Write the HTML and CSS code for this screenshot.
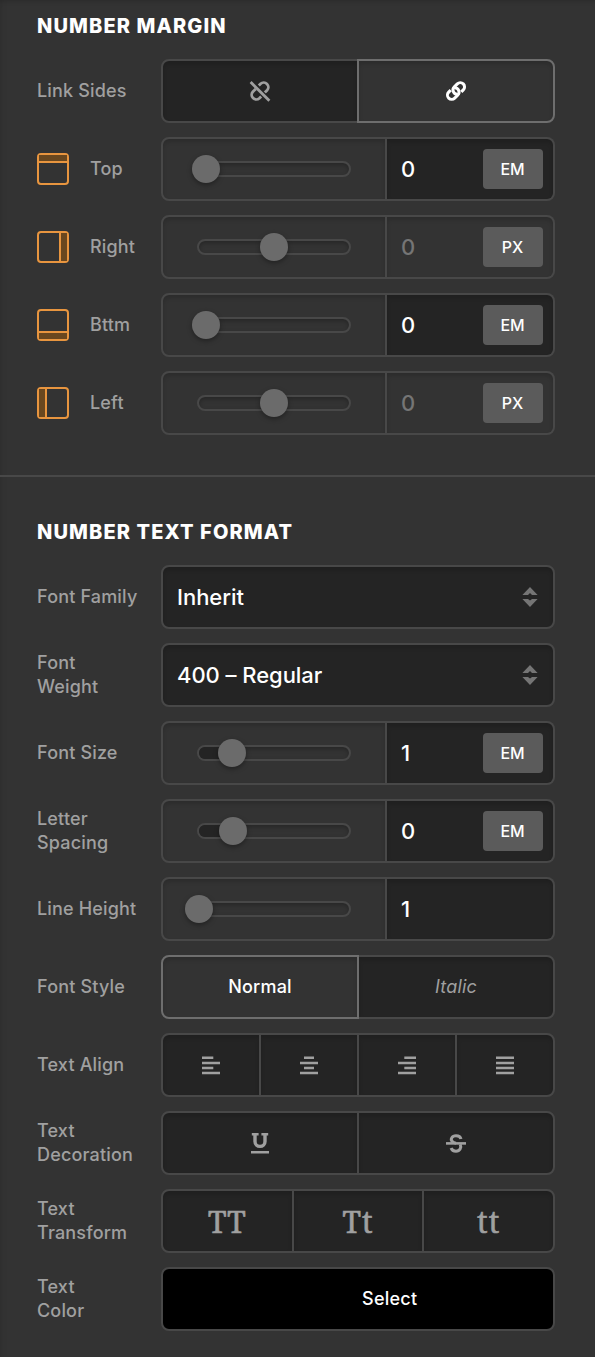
FILE: index.html
```html
<!DOCTYPE html>
<html lang="en">
<head>
  <meta charset="UTF-8" />
  <meta name="viewport" content="width=device-width, initial-scale=1.0"/>
  <title>Number Settings</title>
  <link rel="stylesheet" href="styles.css">
</head>
<body>
  <div class="panel">
    <section class="group">
      <h2>Number Margin</h2>

      <div class="row">
        <label>Link Sides</label>
        <div class="control">
          <button class="choice">
            <svg width="24" height="24" viewBox="0 0 24 24" fill="none" stroke="currentColor" stroke-width="2.8">
              <path d="M10.8 6.6l1.8-1.8a4.6 4.6 0 0 1 6.5 6.5l-2.8 2.8M13.2 17.4l-1.8 1.8a4.6 4.6 0 0 1-6.5-6.5l2.8-2.8"/>
              <path class="gap" d="M4 1.8l18.6 18.6"/>
              <path d="M2.6 3l18.8 18.8"/>
            </svg>
          </button>
          <button class="choice active">
            <svg width="24" height="24" viewBox="0 0 24 24" fill="none" stroke="currentColor" stroke-width="3">
              <path d="M13.4 15.2a4.24 4.24 0 0 1-3.1-7.3l3-3a4.24 4.24 0 0 1 6 6l-2 2"/>
              <path d="M10.6 8.8a4.24 4.24 0 0 1 3.1 7.3l-3 3a4.24 4.24 0 0 1-6-6l2-2"/>
            </svg>
          </button>
        </div>
      </div>

      <div class="row">
        <span class="side top"></span>
        <label class="side-label">Top</label>
        <div class="control">
          <div class="slider"><div class="track"><span class="knob" style="left: -7px"></span></div></div>
          <div class="value"><span>0</span><button class="unit">EM</button></div>
        </div>
      </div>

      <div class="row">
        <span class="side right"></span>
        <label class="side-label">Right</label>
        <div class="control">
          <div class="slider"><div class="track"><span class="knob" style="left: 61px"></span></div></div>
          <div class="value empty"><span>0</span><button class="unit">PX</button></div>
        </div>
      </div>

      <div class="row">
        <span class="side bottom"></span>
        <label class="side-label">Bttm</label>
        <div class="control">
          <div class="slider"><div class="track"><span class="knob" style="left: -7px"></span></div></div>
          <div class="value"><span>0</span><button class="unit">EM</button></div>
        </div>
      </div>

      <div class="row">
        <span class="side left"></span>
        <label class="side-label">Left</label>
        <div class="control">
          <div class="slider"><div class="track"><span class="knob" style="left: 61px"></span></div></div>
          <div class="value empty"><span>0</span><button class="unit">PX</button></div>
        </div>
      </div>
    </section>

    <section class="group">
      <h2>Number Text Format</h2>

      <div class="row">
        <label>Font Family</label>
        <div class="control select">
          <span>Inherit</span>
          <svg width="16" height="20" viewBox="0 0 16 20" fill="currentColor"><path d="M8 0l7.6 8H10L8 6 6 8H.4zM8 20L.4 12H6l2 1.6 2-1.6h5.6z"/></svg>
        </div>
      </div>

      <div class="row">
        <label>Font Weight</label>
        <div class="control select">
          <span>400 – Regular</span>
          <svg width="16" height="20" viewBox="0 0 16 20" fill="currentColor"><path d="M8 0l7.6 8H10L8 6 6 8H.4zM8 20L.4 12H6l2 1.6 2-1.6h5.6z"/></svg>
        </div>
      </div>

      <div class="row">
        <label>Font Size</label>
        <div class="control">
          <div class="slider"><div class="track"><span class="fill" style="width: 34px"></span><span class="knob" style="left: 19.4px"></span></div></div>
          <div class="value"><span>1</span><button class="unit">EM</button></div>
        </div>
      </div>

      <div class="row">
        <label>Letter Spacing</label>
        <div class="control">
          <div class="slider"><div class="track"><span class="fill" style="width: 35px"></span><span class="knob" style="left: 20.4px"></span></div></div>
          <div class="value"><span>0</span><button class="unit">EM</button></div>
        </div>
      </div>

      <div class="row">
        <label>Line Height</label>
        <div class="control">
          <div class="slider"><div class="track"><span class="knob" style="left: -14px"></span></div></div>
          <div class="value"><span>1</span></div>
        </div>
      </div>

      <div class="row">
        <label>Font Style</label>
        <div class="control">
          <button class="choice active">Normal</button>
          <button class="choice italic">Italic</button>
        </div>
      </div>

      <div class="row">
        <label>Text Align</label>
        <div class="control">
          <button class="choice"><svg width="18" height="20" viewBox="0 0 18 20" stroke="currentColor" stroke-width="2.4"><path d="M0 2.8h11.3M0 8h18M0 13h11.3M0 18h18"/></svg></button>
          <button class="choice"><svg width="18" height="20" viewBox="0 0 18 20" stroke="currentColor" stroke-width="2.4"><path d="M4 2.8h10M0 8h18M4 13h10M0 18h18"/></svg></button>
          <button class="choice"><svg width="18" height="20" viewBox="0 0 18 20" stroke="currentColor" stroke-width="2.4"><path d="M6.3 2.8H18M0 8h18M6.3 13H18M0 18h18"/></svg></button>
          <button class="choice"><svg width="18" height="20" viewBox="0 0 18 20" stroke="currentColor" stroke-width="2.4"><path d="M0 2.8h18M0 8h18M0 13h18M0 18h18"/></svg></button>
        </div>
      </div>

      <div class="row">
        <label>Text Decoration</label>
        <div class="control">
          <button class="choice">
            <svg width="20" height="22" viewBox="0 0 20 22" fill="none" stroke="currentColor" stroke-width="2.6">
              <path d="M1.8 2.2h6.8M11.4 2.2h6.8M1 20.2h18"/>
              <path d="M5 2v7.4a5 5 0 0 0 10 0V2" stroke-width="3.4"/>
            </svg>
          </button>
          <button class="choice">
            <svg width="20" height="22" viewBox="0 0 20 22" fill="none" stroke="currentColor" stroke-width="3">
              <path d="M0 11.4h20" stroke-width="2.6"/>
              <path d="M15 7C14.4 4.600 12.400 3.700 10 3.700 6 3.700 4 7 6.300 9.600 7 10.400 8 10.900 10 11.200M14.200 12.400c1.600 3.200-.4 6.800-4.200 6.800-2.600 0-4.200-1-4.900-3.200"/>
            </svg>
          </button>
        </div>
      </div>

      <div class="row">
        <label>Text Transform</label>
        <div class="control transform">
          <button class="choice">TT</button>
          <button class="choice">Tt</button>
          <button class="choice">tt</button>
        </div>
      </div>

      <div class="row">
        <label>Text<br>Color</label>
        <button class="control color">Select</button>
      </div>
    </section>
  </div>
</body>
</html>
```
FILE: styles.css
```css
* {
  box-sizing: border-box;
}

body {
  margin: 0;
  background-color: #333;
  font-family: Inter, 'Liberation Sans', sans-serif;
  color: #fff;
}

button {
  padding: 0;
  border: none;
  font: inherit;
  letter-spacing: inherit;
  color: inherit;
}

.panel {
  min-height: 1357px;
  box-shadow: inset 6px 0 6px -5px rgba(0, 0, 0, 0.1), inset 0 5px 6px -5px rgba(0, 0, 0, 0.2);
}

.group {
  display: flex;
  flex-direction: column;
  gap: 14px;
  padding: 13px 40px 40px 37px;
}

.group + .group {
  padding-top: 42px;
  padding-bottom: 26px;
  border-top: 2px solid #484848;
}

h2 {
  margin: 0 0 6px;
  font-size: 20px;
  line-height: 26px;
  font-weight: 800;
  letter-spacing: 1.1px;
  text-transform: uppercase;
}

.row {
  display: flex;
  align-items: center;
}

label {
  width: 104px;
  margin-right: 20px;
  font-size: 18px;
  line-height: 24px;
  letter-spacing: 0.17px;
  font-weight: 450;
  color: #a0a0a0;
}

.side-label {
  width: 51px;
}

/* box with one edge filled */
.side {
  width: 32px;
  height: 32px;
  margin-right: 21px;
  border: 2px solid #e8953f;
  border-radius: 4px;
  display: flex;
}

.side::before {
  content: "";
  flex: 1;
  background-color: #69471f;
}

.top::before {
  height: 6px;
  border-bottom: 2px solid #e8953f;
}

.bottom::before {
  height: 6px;
  margin-top: auto;
  border-top: 2px solid #e8953f;
}

.left::before {
  flex: 0 0 6px;
  border-right: 2px solid #e8953f;
}

.right::before {
  flex: 0 0 6px;
  margin-left: auto;
  border-left: 2px solid #e8953f;
}

.control {
  display: flex;
  width: 394px;
  height: 64px;
  flex-shrink: 0;
}

/* button groups */
.choice {
  flex: 1;
  display: flex;
  align-items: center;
  justify-content: center;
  margin-left: -2px;
  border: 2px solid #484848;
  background-color: #242424;
  box-shadow: inset 0 3px 4px rgba(0, 0, 0, 0.15);
  color: #a0a0a0;
  font-size: 18px;
  line-height: 24px;
  padding-bottom: 1px;
  letter-spacing: 0.2px;
}

.choice svg {
  position: relative;
  top: 0.5px;
}

.choice .gap {
  stroke: #242424;
  stroke-width: 1.6;
}

.choice:first-child {
  margin-left: 0;
  border-radius: 8px 0 0 8px;
}

.choice:last-child {
  border-radius: 0 8px 8px 0;
}

.choice.active {
  z-index: 1;
  border-color: #6e6e6e;
  background-color: #333;
  color: #fff;
  font-weight: 500;
}

.italic {
  font-style: italic;
  font-weight: 450;
}

.transform .choice {
  padding: 1px 0 0;
  font-family: 'Noto Serif', 'DejaVu Serif', serif;
  font-size: 30px;
  letter-spacing: 1px;
  -webkit-text-stroke: 0.6px currentColor;
}

/* sliders */
.slider {
  width: 226px;
  padding: 0 34px;
  display: flex;
  align-items: center;
  border: 2px solid #484848;
  border-radius: 8px 0 0 8px;
  box-shadow: inset 0 3px 4px rgba(0, 0, 0, 0.15);
}

.track {
  position: relative;
  width: 154px;
  height: 16px;
  border: 2px solid #484848;
  border-radius: 8px;
  box-shadow: inset 0 2px 4px rgba(0, 0, 0, 0.25);
}

.fill {
  display: block;
  height: 12px;
  border-radius: 6px 0 0 6px;
  background-color: #242424;
}

.knob {
  position: absolute;
  top: -8px;
  width: 28px;
  height: 28px;
  border-radius: 50%;
  background-color: #6b6b6b;
  box-shadow: 0 2px 5px rgba(0, 0, 0, 0.35);
}

.value {
  flex: 1;
  display: flex;
  align-items: center;
  justify-content: space-between;
  padding: 0 10px 0 14px;
  border: 2px solid #484848;
  border-left: none;
  border-radius: 0 8px 8px 0;
  background-color: #242424;
  box-shadow: inset 0 3px 4px rgba(0, 0, 0, 0.15);
  font-size: 22px;
  font-weight: 500;
}

.value.empty {
  background-color: #333;
}

.value.empty span {
  color: #757575;
}

.unit {
  width: 60px;
  height: 40px;
  padding-right: 1px;
  border-radius: 4px;
  background-color: #5b5b5b;
  font-size: 16px;
}

.select {
  align-items: center;
  justify-content: space-between;
  padding: 0 15.5px 0 14px;
  border: 2px solid #484848;
  border-radius: 8px;
  background-color: #242424;
  box-shadow: inset 0 3px 4px rgba(0, 0, 0, 0.15);
  font-size: 22px;
  font-weight: 500;
  letter-spacing: -0.05px;
}

.select svg {
  color: #757575;
}

.color {
  align-items: center;
  padding: 0 0 1px 199px;
  border: 2px solid #484848;
  border-radius: 8px;
  background-color: #000;
  font-size: 18px;
  line-height: 24px;
  font-weight: 500;
  letter-spacing: 0.25px;
}
```
